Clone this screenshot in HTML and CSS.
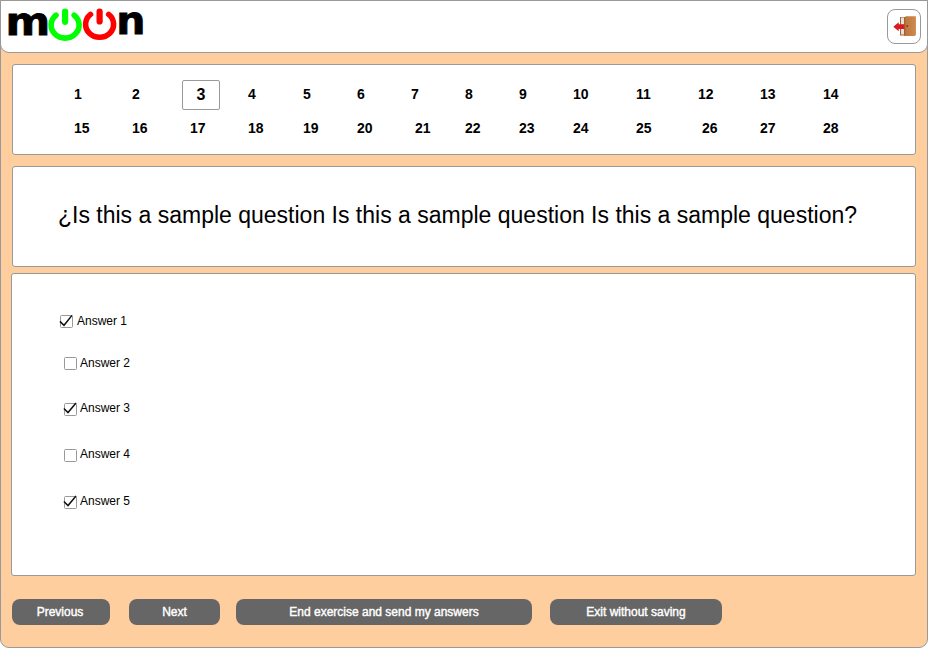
FILE: index.html
```html
<!DOCTYPE html>
<html lang="en">
<head>
<meta charset="utf-8">
<title>moon</title>
<link rel="stylesheet" href="styles.css">
</head>
<body>
<div class="app">
  <header class="header">
    <svg class="logo" width="160" height="48" viewBox="0 0 160 48" role="img" aria-label="moon">
      <text class="logo-letter" transform="translate(5.6 34.6) scale(1.13 1)">m</text>
      <g class="power power-green"><path d="M56 15.2A14 13 0 1 0 74.2 15.2"/><path class="bar" d="M65.1 11.7V21.8"/></g>
      <g class="power power-red"><path d="M90.5 14.4A14 13 0 1 0 108.7 14.4"/><path class="bar" d="M99.6 11.7V21.4"/></g>
      <text class="logo-letter" transform="translate(116.2 33.6) scale(1.08 1)">n</text>
    </svg>
    <button class="exit" aria-label="Exit">
      <svg width="32" height="33" viewBox="888 10 32 33">
        <defs><linearGradient id="wood"><stop offset="0" stop-color="#bd743a"/><stop offset="1" stop-color="#cd8b50"/></linearGradient></defs>
        <path d="M900 17H915.5V35.5H900Z" fill="#a95f2b"/>
        <path d="M901 17.5H904.5V34.5H901Z" fill="#dde3e2"/>
        <path d="M904.3 17.6L906 16.2H915.8V34.8L914 36H904.3Z" fill="url(#wood)"/>
        <path d="M904.7 17.5V35.5" stroke="#94511f" stroke-width=".8"/>
        <circle cx="907.3" cy="26" r=".9" fill="#713a16"/>
        <path d="M893.3 26.8L898.7 22.3V24.2H904.3V29H898.7V31.2Z" fill="#dc1820"/>
      </svg>
    </button>
  </header>
  <main class="main">
    <nav class="panel pager">
      <a>1</a><a>2</a><a class="current">3</a><a>4</a><a>5</a><a>6</a><a>7</a><a>8</a><a>9</a><a>10</a><a>11</a><a>12</a><a>13</a><a>14</a>
      <a>15</a><a>16</a><a>17</a><a>18</a><a>19</a><a>20</a><a class="shifted">21</a><a>22</a><a>23</a><a>24</a><a>25</a><a class="shifted">26</a><a>27</a><a>28</a>
    </nav>
    <section class="panel question"><h1>¿Is this a sample question Is this a sample question Is this a sample question?</h1></section>
    <section class="panel answers">
      <label class="answer first"><svg class="check" viewBox="0 0 15 15"><rect x="1.5" y="1.5" width="12" height="12" rx="1"/><path d="M.9 7.4L5 11.3L13 1.4"/></svg><span>Answer 1</span></label>
      <label class="answer"><svg class="check" viewBox="0 0 15 15"><rect x="1.5" y="1.5" width="12" height="12" rx="1"/></svg><span>Answer 2</span></label>
      <label class="answer"><svg class="check" viewBox="0 0 15 15"><rect x="1.5" y="1.5" width="12" height="12" rx="1"/><path d="M.9 6.4L5 10.6L13 1"/></svg><span>Answer 3</span></label>
      <label class="answer"><svg class="check" viewBox="0 0 15 15"><rect x="1.5" y="1.5" width="12" height="12" rx="1"/></svg><span>Answer 4</span></label>
      <label class="answer"><svg class="check" viewBox="0 0 15 15"><rect x="1.5" y="1.5" width="12" height="12" rx="1"/><path d="M.9 6.4L5 10.6L13 1"/></svg><span>Answer 5</span></label>
    </section>
    <footer class="actions"><button>Previous</button><button>Next</button><button>End exercise and send my answers</button><button>Exit without saving</button></footer>
  </main>
</div>
</body>
</html>
```
FILE: styles.css
```css
* { box-sizing: border-box; }
body { margin: 0; background: #fff; font-family: "Liberation Sans", Arial, sans-serif; color: #000; }
.app { width: 928px; height: 648px; border: 1px solid #999; border-radius: 0 0 9px 9px; background: #ffce9f; }
.header { height: 53px; margin: -1px; display: flex; justify-content: space-between; align-items: flex-start; background: #fff; border: 1px solid #999; border-radius: 0 0 9px 9px; }
.logo { display: block; margin: -1px 0 0 -1px; overflow: visible; }
.logo-letter { font: bold 38px "DejaVu Sans", sans-serif; stroke: #000; stroke-width: .8; }
.power { fill: none; stroke-width: 5.6; stroke-linecap: round; }
.power-green { stroke: #0f0; }
.power-red { stroke: #f00; }
.power .bar { stroke-width: 6.2; }
.exit { width: 34px; height: 35px; margin: 8px 6px 0 0; padding: 0; border: 1px solid #999; border-radius: 8px; background: #fff; }
.exit svg { display: block; }
.main { padding: 12px 11px 0; display: flex; flex-direction: column; }
.panel { width: 904px; background: #fff; border: 1px solid #999; border-radius: 3px; }
.pager { height: 91px; padding: 12px 0 0 61px; display: grid; grid-template-columns: 58px 58px 58px 55px 54px 54px 54px 54px 54px 63px 62px 62px 63px 30px; grid-template-rows: 34px 34px; align-items: center; font-size: 14px; font-weight: bold; line-height: 16px; }
.pager .current { width: 38px; height: 30px; margin: 2px 0 0 -8px; border: 1px solid #999; border-radius: 2px; font-size: 16px; line-height: 28px; text-align: center; }
.pager .shifted { padding-left: 4px; }
.question { height: 101px; margin-top: 11px; padding: 35px 0 0 45px; }
.question h1 { margin: 0; font-size: 23px; font-weight: normal; line-height: 26px; white-space: nowrap; }
.answers { width: 905px; height: 303px; margin: 6px 0 0 -1px; padding: 40px 0 0 51px; display: flex; flex-direction: column; align-items: flex-start; }
.answer { height: 15px; display: flex; align-items: center; gap: 2px; font-size: 12px; line-height: 14px; }
.answer:nth-child(2) { margin-top: 27px; }
.answer:nth-child(3) { margin-top: 30px; }
.answer:nth-child(4) { margin-top: 31px; }
.answer:nth-child(5) { margin-top: 32px; }
.answer.first { margin-left: -4px; gap: 3px; }
.check { width: 15px; height: 15px; fill: #fff; stroke: #999; overflow: visible; }
.answer:nth-child(n+3) .check { margin-top: 2px; }
.check path { fill: none; stroke: #111; stroke-width: 1.5; }
.answer span { margin-top: -1px; }
.actions { display: grid; grid-template-columns: 117px 107px 314px 172px; margin-top: 23px; }
.actions button { width: 172px; height: 26px; padding: 0 0 1px; border: 0; border-radius: 8px; background: #666; color: #fff; font: 12px "Liberation Sans", Arial, sans-serif; -webkit-text-stroke: .4px #fff; }
.actions button:nth-child(1) { width: 98px; padding-right: 2px; }
.actions button:nth-child(2) { width: 91px; }
.actions button:nth-child(3) { width: 296px; }
```
